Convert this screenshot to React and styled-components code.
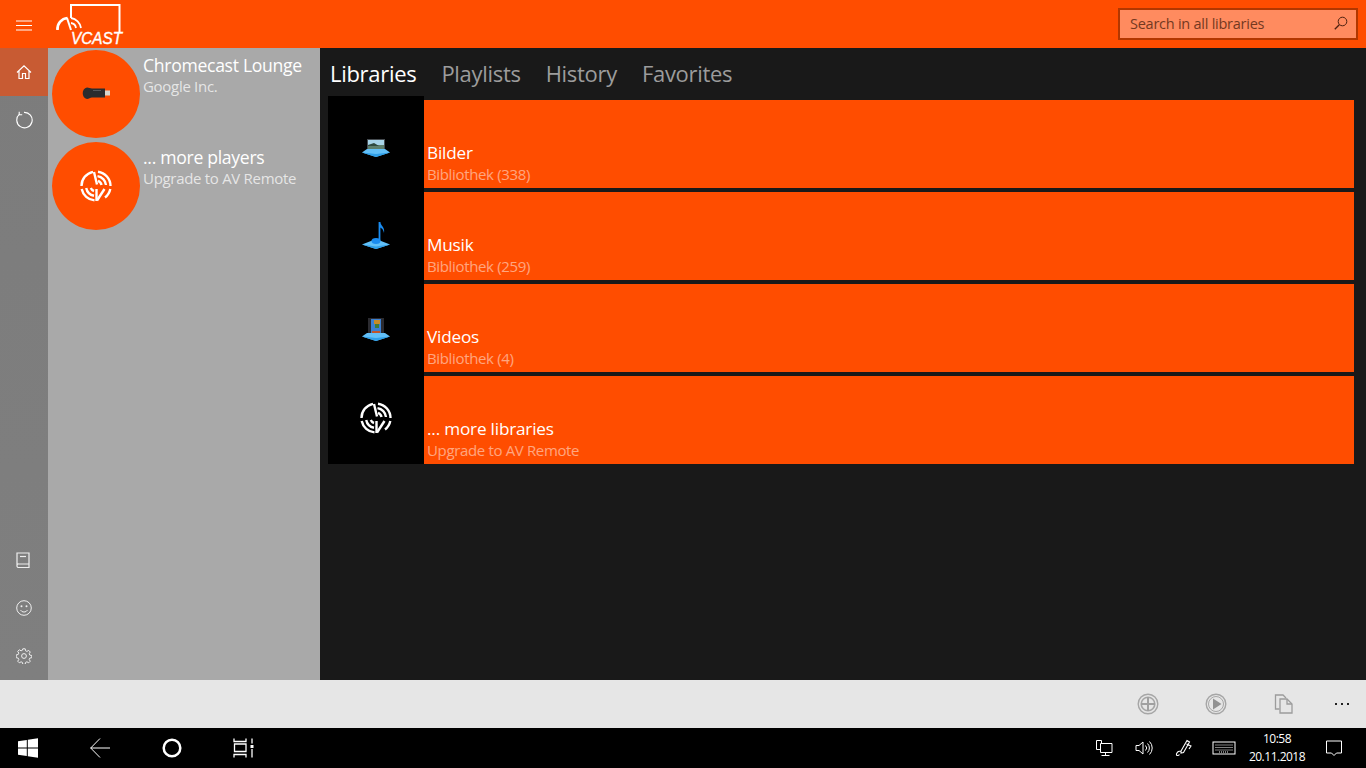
import React from "react";
import styled, { createGlobalStyle } from "styled-components";

const Global = createGlobalStyle`
  html, body { margin: 0; padding: 0; height: 100%; background: #191919; overflow: hidden; }
  * { box-sizing: border-box; }
  body { font-family: "Open Sans", "Noto Sans", "Liberation Sans", sans-serif; }
`;

const ORANGE = "#ff4d00";

const Page = styled.div`
  width: 1366px; height: 768px;
  display: grid;
  grid-template-rows: 48px 632px 48px 40px;
`;
const TopBar = styled.header`
  background: ${ORANGE};
  display: flex; align-items: stretch;
`;
const IconSlot = styled.div`
  width: 48px; height: 48px; flex: none;
  display: flex; align-items: center; justify-content: center;
  background: ${p => (p.$active ? "#c85b33" : "transparent")};
`;
const LogoBox = styled.div`
  width: 80px; height: 48px; margin-left: 6px; flex: none;
  display: flex; align-items: flex-start;
`;
const Search = styled.div`
  margin: 8px 8px 8px auto;
  width: 240px; height: 32px;
  border: 2px solid #b23700;
  background: #ff8b5f;
  display: flex; align-items: center; justify-content: space-between;
  padding: 0 8px 2px 10px;
  color: #74391f;
  font-size: 14.5px; letter-spacing: -0.25px;
`;
const Body = styled.div`
  display: grid;
  grid-template-columns: 48px 272px 1fr;
  min-height: 0;
`;
const Rail = styled.nav`
  background: linear-gradient(180deg, #7c7c7c 0%, #7f7f7f 100%);
  display: flex; flex-direction: column; justify-content: space-between;
`;
const RailGroup = styled.div`
  display: flex; flex-direction: column;
`;
const Players = styled.aside`
  background: #a9a9a9;
  display: flex; flex-direction: column;
`;
const Player = styled.div`
  height: 92px; padding: 2px 4px;
  display: flex; gap: 3px;
`;
const Disc = styled.div`
  width: 88px; height: 88px; border-radius: 50%;
  background: ${ORANGE};
  flex: none;
  display: flex; align-items: center; justify-content: center;
`;
const PlayerText = styled.div`
  display: flex; flex-direction: column; padding-top: 3px;
`;
const PlayerName = styled.div`
  color: #fff; font-size: 17.6px; line-height: 24px; letter-spacing: -0.3px; white-space: nowrap;
`;
const PlayerSub = styled.div`
  color: rgba(255,255,255,.72); font-size: 15px; line-height: 19px; letter-spacing: -0.3px; white-space: nowrap;
`;
const Main = styled.main`
  background: #191919;
  padding-right: 12px; padding-left: 8px;
  display: flex; flex-direction: column;
`;
const Tabs = styled.div`
  height: 48px; flex: none;
  display: flex; align-items: center; gap: 25px; padding: 2px 0 0 2px;
`;
const Tab = styled.div`
  font-size: 22px; letter-spacing: -0.3px; line-height: 30px;
  color: ${p => (p.$active ? "#fff" : "#9c9c9c")};
`;
const List = styled.div`
  display: flex; flex-direction: column;
`;
const Row = styled.div`
  height: 92px;
  display: grid; grid-template-columns: 96px 1fr;
`;
const Thumb = styled.div`
  background: #000;
  display: flex; align-items: center; justify-content: center;
`;
const Tile = styled.div`
  margin-top: 4px;
  background: ${ORANGE};
  display: flex; flex-direction: column; justify-content: flex-end;
  padding: 0 0 5px 3px;
`;
const TileName = styled.div`
  color: #fff; font-size: 17.2px; line-height: 24px; letter-spacing: -0.2px;
`;
const TileSub = styled.div`
  color: rgba(255,255,255,.5); font-size: 15px; line-height: 18px; letter-spacing: -0.35px;
`;
const CommandBar = styled.div`
  background: #e6e6e6;
  display: flex; align-items: center; justify-content: flex-end;
`;
const Command = styled.div`
  width: 68px; height: 48px; flex: none;
  display: flex; align-items: center; justify-content: center;
`;
const More = styled.div`
  width: 48px; height: 48px; flex: none;
  display: flex; align-items: center; justify-content: center; gap: 4px;
`;
const Dot = styled.span`
  width: 2px; height: 2px; background: #222; display: block;
`;
const TaskBar = styled.footer`
  background: #000;
  display: flex; align-items: center; justify-content: space-between;
`;
const TaskGroup = styled.div`
  display: flex; align-items: center;
`;
const TaskSlot = styled.div`
  width: ${p => p.$w || 72}px; height: 40px; flex: none;
  display: flex; align-items: center; justify-content: center;
`;
const Clock = styled.div`
  width: 66px; margin-right: 1px; color: #fff; font-size: 12px; line-height: 18px; text-align: center; letter-spacing: -0.5px; flex: none;
`;

const S = { fill: "none", stroke: "currentColor", strokeWidth: 1 };
const Ico = ({ size = 16, color = "#fff", children, vb }) => (
  <svg width={size} height={size} viewBox={vb || `0 0 ${size} ${size}`} style={{ color, display: "block" }}>{children}</svg>
);

const Burger = () => <Ico><path {...S} d="M0 5h16M0 9.500h16M0 14h16" /></Ico>;
const Home = () => <Ico><path {...S} strokeWidth="1.2" d="M1 8.500 8 1.800l7 6.700M3 7v7.500h3.500v-5h3v5H13V7" /></Ico>;
const Refresh = () => <Ico size={18}><path {...S} strokeWidth="1.1" d="M4.500 3.200A7.700 7.700 0 1 0 9 1.400" /><path {...S} strokeWidth="1.1" d="M4.200 .8v3h3" /></Ico>;
const Book = () => <Ico color="#eee"><path {...S} strokeWidth="1.2" d="M1 12.500V1h12v14.500H2.500A1.500 1.500 0 0 1 1 14v-1a1.300 1.300 0 0 1 1.500-1H13" /><path {...S} strokeWidth="1.2" d="M4 4.500h6" /></Ico>;
const Smile = () => <Ico color="#eee"><circle {...S} cx="8" cy="8" r="7.300" /><circle cx="5.500" cy="6.200" r="1" fill="currentColor" /><circle cx="10.500" cy="6.200" r="1" fill="currentColor" /><path {...S} d="M4.500 10a4 4 0 0 0 7 0" /></Ico>;
const Gear = () => (
  <Ico color="#eee">
    <circle {...S} cx="8" cy="8" r="2.400" />
    <path {...S} d="M6.800.8h2.400l.4 2 1.300.6 1.800-1 1.600 1.600-1.100 1.700.6 1.400 2 .4v2.200l-2 .4-.6 1.400 1.100 1.700-1.600 1.600-1.800-1-1.300.6-.4 2H6.800l-.4-2-1.300-.6-1.800 1-1.600-1.600 1.100-1.700-.6-1.400-2-.4V6.900l2-.4.6-1.400-1.100-1.700 1.600-1.600 1.800 1 1.300-.6z" />
  </Ico>
);
const Mark = ({ size = 32 }) => (
  <svg width={size} height={size} viewBox="0 0 32 32" style={{ display: "block" }}>
    <g fill="none" stroke="#fff" strokeWidth="2.400">
      <path d="M13 1.800A14.500 14.500 0 0 0 1.500 16" />
      <path d="M1.700 19A14.500 14.500 0 0 0 14.500 30.400" />
      <path d="M18 1.700A14.500 14.500 0 0 1 30.500 16" />
      <path d="M30.300 19A14.500 14.500 0 0 1 25 27.500" />
      <path d="M14 2l3 12.500" />
      <path d="M17.500 6.100A10 10 0 0 1 26 15" />
      <path d="M18 10.900A5.500 5.500 0 0 1 21.500 15" />
      <path d="M6.200 18A10 10 0 0 0 14 25.800" />
      <path d="M10.800 18A5.500 5.500 0 0 0 14 21" />
      <path d="M16.500 31V19" />
      <path d="M17 30.500 24.500 19" />
    </g>
  </svg>
);
const Logo = () => (
  <svg width="80" height="48" viewBox="0 0 80 48" style={{ display: "block" }}>
    <g fill="none" stroke="#fff">
      <path strokeWidth="2" d="M17 18V5h48.500v27" />
      <path strokeWidth="2.600" d="M3.500 30a11 11 0 0 1 10-12" />
      <path strokeWidth="2" d="M13 18l4 12" />
      <path strokeWidth="1.800" d="M17 18a12 12 0 0 1 10 10M17 23a6 6 0 0 1 5 5" />
    </g>
    <text x="17" y="44" fontFamily="Liberation Sans, sans-serif" fontStyle="italic" fontSize="17" fill="#fff" stroke="#fff" strokeWidth=".4" textLength="51" lengthAdjust="spacingAndGlyphs">VCAST</text>
  </svg>
);
const SearchGlyph = () => <Ico size={14} color="#4d2010"><circle {...S} cx="8.500" cy="5.500" r="4.300" /><path {...S} strokeWidth="1.300" d="M5.300 8.700.8 13.200" /></Ico>;

const Chromecast = () => (
  <svg width="30" height="14" viewBox="0 0 30 14" style={{ display: "block" }}>
    <path d="M6 .5c2 0 3 1 5 1h13v9H11c-2 0-3 1.500-5 1.500A6 6 0 0 1 6 .5z" fill="#2a2c2e" />
    <rect x="12" y="3" width="8" height="1" fill="#55585c" />
    <rect x="24" y="3.500" width="5" height="5" fill="#d8d6cc" />
  </svg>
);
const Tray = () => (
  <>
    <path d="M1 25.500 6 22h18l5 3.500-14 4.500z" fill="#62c0f8" />
    <path d="M1 25.500 15 27l14-1.500L15 30z" fill="#2f9fe8" />
  </>
);
const Pictures = () => (
  <svg width="30" height="30" viewBox="0 0 30 30" style={{ display: "block" }}>
    <rect x="6" y="12" width="18" height="11" fill="#454b50" />
    <rect x="7" y="13" width="16" height="5" fill="#a8d4e8" />
    <rect x="7" y="18" width="16" height="4" fill="#5d7f6c" />
    <path d="M7 18l6-2 5 3H7z" fill="#2f4a3f" />
    <Tray />
  </svg>
);
const Music = () => (
  <svg width="30" height="30" viewBox="0 0 30 30" style={{ display: "block" }}>
    <path d="M1 25.500 15 20l14 5.500L15 30z" fill="#62c0f8" />
    <path d="M1 25.500 15 27.500l14-2L15 30z" fill="#2f9fe8" />
    <ellipse cx="15" cy="22" rx="4.500" ry="3" fill="#1a8cf0" />
    <path d="M18.500 22V3" stroke="#1a8cf0" strokeWidth="1.800" fill="none" />
    <path d="M19 3c1 4 5 5 4 11-.5-3-2-5-4-5.500z" fill="#1a8cf0" />
  </svg>
);
const Videos = () => (
  <svg width="30" height="30" viewBox="0 0 30 30" style={{ display: "block" }}>
    <rect x="7" y="7" width="16" height="17" fill="#2b2b30" />
    <rect x="10" y="8" width="10" height="15" fill="#3b7fd0" />
    <rect x="13" y="9" width="6" height="4" fill="#c88b24" />
    <rect x="14" y="13" width="4" height="4" fill="#3f7b34" />
    <rect x="11" y="20" width="8" height="2" fill="#c2552a" />
    <Tray />
  </svg>
);

const CircleAdd = () => (
  <Ico size={22} color="#a6a6a6" vb="0 0 22 22">
    <circle {...S} strokeWidth="1.400" cx="11" cy="11" r="9.800" />
    <circle {...S} strokeWidth="1.600" cx="11" cy="11" r="6.800" />
    <path d="M11 4v14M4 11h14" stroke="#a0a0a0" strokeWidth="2" />
  </Ico>
);
const CirclePlay = () => (
  <Ico size={22} color="#a6a6a6" vb="0 0 22 22">
    <circle {...S} strokeWidth="1.400" cx="11" cy="11" r="9.800" />
    <circle {...S} strokeWidth="1" cx="11" cy="11" r="7.500" />
    <path d="M8 5.500 16.500 11 8 16.500z" fill="#929292" />
  </Ico>
);
const CopyDoc = () => (
  <Ico size={20} color="#9c9c9c" vb="0 0 20 20">
    <path {...S} strokeWidth="1.300" d="M5.500 15H1.500V1H9l3 3" />
    <path d="M6 5h7l5 5v9H6z" fill="#e6e6e6" stroke="currentColor" strokeWidth="1.300" />
    <path {...S} strokeWidth="1.300" d="M13 5v5h5" />
  </Ico>
);

const Win = () => (
  <svg width="20" height="20" viewBox="0 0 20 20" style={{ display: "block" }}><path fill="#fff" d="M0 3.200 8.800 2v7.500H0zM9.800 1.800 20 .2v9.300H9.800zM0 10.500h8.800V18L0 16.800zM9.800 10.500H20v9.300L9.800 18.200z" /></svg>
);
const Back = () => <Ico size={20} vb="0 0 20 20"><path {...S} d="M.5 10h19.500M10 .5.700 10l9.300 9.500" /></Ico>;
const Cortana = () => <Ico size={20} vb="0 0 20 20"><circle fill="none" stroke="#fff" strokeWidth="2.500" cx="10" cy="10" r="8.300" /></Ico>;
const TaskView = () => (
  <Ico size={22} vb="0 0 22 20">
    <path {...S} strokeWidth="1.300" d="M1 .5v3h12v-3M1.500 6h11.500v7.500H1.500zM1 19.500v-3h12v3M19 .5v5M19 11v8.500" />
    <rect x="17.500" y="7" width="3" height="3" fill="#fff" />
  </Ico>
);
const Net = () => <Ico size={18} vb="0 0 18 18"><path {...S} d="M5.500 4.500h11.500v9H5.500zM10.500 13.500v3M6.500 16.500h8M1.500 1.500h5v3M1.500 1.500v9h4" /></Ico>;
const Vol = () => <Ico size={18} vb="0 0 18 18"><path {...S} d="M1 6.500h3L8 3v12l-4-3.500H1zM10.500 6.500a3.500 3.500 0 0 1 0 5M12.500 4.500a6.300 6.300 0 0 1 0 9M14.500 2.500a9.200 9.200 0 0 1 0 13" /></Ico>;
const Pen = () => <Ico size={18} vb="0 0 18 18"><path {...S} strokeWidth="1.100" d="M6 12 12 1.500l2.500 1.500-6 10.500-2.500.5zM11.500 5l4.500 2-2 3M6 12c-2 0-4 1-4.500 3s2 2 3 .5" /></Ico>;
const Keys = () => (
  <Ico size={24} vb="0 0 24 14">
    <rect {...S} x="1" y="1" width="22" height="12" />
    <path d="M3.500 4h17M3.500 6.500h17M3.500 9h17M7 11h10" stroke="#fff" strokeDasharray="1 1" fill="none" />
  </Ico>
);
const Note = () => <Ico size={18} vb="0 0 18 18"><path {...S} d="M1.500 2h15v12h-5l-2.500 2.500L6.500 14h-5z" /></Ico>;

const players = [
  { name: "Chromecast Lounge", sub: "Google Inc.", icon: <Chromecast /> },
  { name: "... more players", sub: "Upgrade to AV Remote", icon: <Mark /> },
];
const libs = [
  { name: "Bilder", sub: "Bibliothek (338)", icon: <Pictures /> },
  { name: "Musik", sub: "Bibliothek (259)", icon: <Music /> },
  { name: "Videos", sub: "Bibliothek (4)", icon: <Videos /> },
  { name: "... more libraries", sub: "Upgrade to AV Remote", icon: <Mark /> },
];

export default function App() {
  return (
    <>
      <Global />
      <Page>
        <TopBar>
          <IconSlot><Burger /></IconSlot>
          <LogoBox><Logo /></LogoBox>
          <Search><span>Search in all libraries</span><SearchGlyph /></Search>
        </TopBar>
        <Body>
          <Rail>
            <RailGroup>
              <IconSlot $active><Home /></IconSlot>
              <IconSlot><Refresh /></IconSlot>
            </RailGroup>
            <RailGroup>
              <IconSlot><Book /></IconSlot>
              <IconSlot><Smile /></IconSlot>
              <IconSlot><Gear /></IconSlot>
            </RailGroup>
          </Rail>
          <Players>
            {players.map(p => (
              <Player key={p.name}>
                <Disc>{p.icon}</Disc>
                <PlayerText>
                  <PlayerName>{p.name}</PlayerName>
                  <PlayerSub>{p.sub}</PlayerSub>
                </PlayerText>
              </Player>
            ))}
          </Players>
          <Main>
            <Tabs>
              <Tab $active>Libraries</Tab>
              <Tab>Playlists</Tab>
              <Tab>History</Tab>
              <Tab>Favorites</Tab>
            </Tabs>
            <List>
              {libs.map(l => (
                <Row key={l.name}>
                  <Thumb>{l.icon}</Thumb>
                  <Tile>
                    <TileName>{l.name}</TileName>
                    <TileSub>{l.sub}</TileSub>
                  </Tile>
                </Row>
              ))}
            </List>
          </Main>
        </Body>
        <CommandBar>
          <Command><CircleAdd /></Command>
          <Command><CirclePlay /></Command>
          <Command><CopyDoc /></Command>
          <More><Dot /><Dot /><Dot /></More>
        </CommandBar>
        <TaskBar>
          <TaskGroup>
            <TaskSlot $w={56}><Win /></TaskSlot>
            <TaskSlot $w={88}><Back /></TaskSlot>
            <TaskSlot $w={56}><Cortana /></TaskSlot>
            <TaskSlot $w={88}><TaskView /></TaskSlot>
          </TaskGroup>
          <TaskGroup>
            <TaskSlot $w={40}><Net /></TaskSlot>
            <TaskSlot $w={40}><Vol /></TaskSlot>
            <TaskSlot $w={40}><Pen /></TaskSlot>
            <TaskSlot $w={40}><Keys /></TaskSlot>
            <Clock>10:58<br />20.11.2018</Clock>
            <TaskSlot $w={46}><Note /></TaskSlot>
            <TaskSlot $w={9} />
          </TaskGroup>
        </TaskBar>
      </Page>
    </>
  );
}
